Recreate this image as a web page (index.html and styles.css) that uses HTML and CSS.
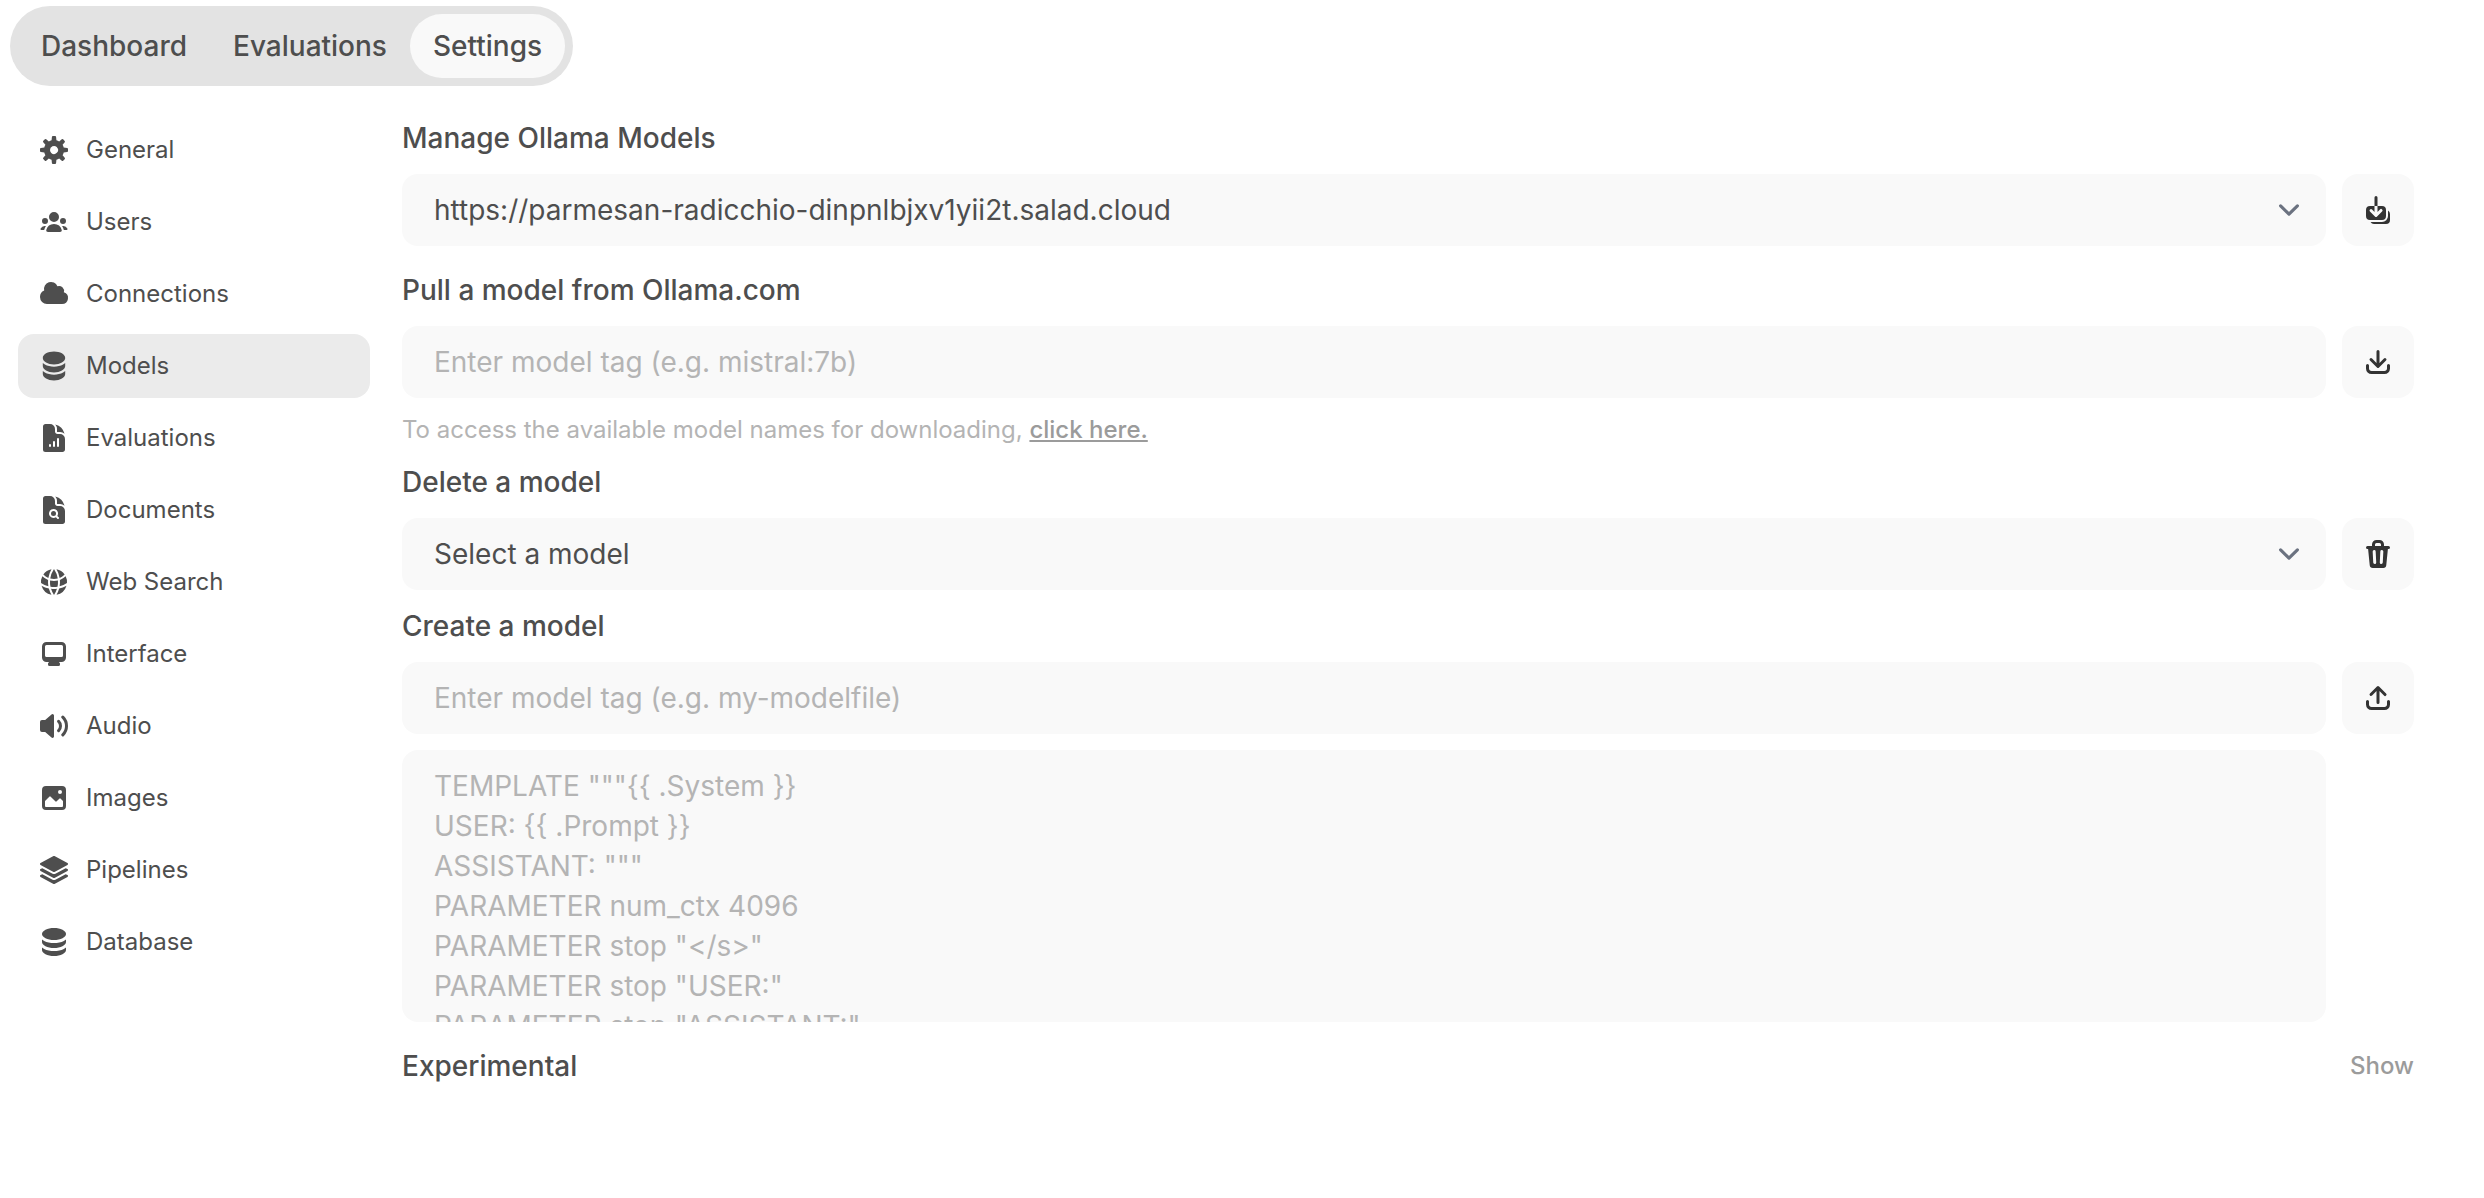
FILE: index.html
```html
<!DOCTYPE html>
<html lang="en">
<head>
<meta charset="utf-8">
<title>Settings</title>
<link rel="stylesheet" href="styles.css">
</head>
<body>
<header class="topbar">
  <nav class="tabs" aria-label="Admin">
    <a class="tab" href="#dashboard">Dashboard</a>
    <a class="tab" href="#evaluations">Evaluations</a>
    <a class="tab tab-active" href="#settings" aria-current="page">Settings</a>
  </nav>
</header>
<div class="layout">
  <nav class="sidebar" aria-label="Settings sections">
    <button class="side-item" type="button">
      <svg class="icon" viewBox="0 0 16 16" aria-hidden="true"><path fill-rule="evenodd" d="M6.955 1.45A.5.5 0 0 1 7.452 1h1.096a.5.5 0 0 1 .497.45l.17 1.699c.484.12.94.312 1.356.562l1.321-1.081a.5.5 0 0 1 .67.033l.774.775a.5.5 0 0 1 .034.67l-1.08 1.32c.25.417.44.873.561 1.357l1.699.17a.5.5 0 0 1 .45.497v1.096a.5.5 0 0 1-.45.497l-1.699.17c-.12.484-.312.94-.562 1.356l1.082 1.322a.5.5 0 0 1-.034.67l-.774.774a.5.5 0 0 1-.67.033l-1.322-1.08c-.416.25-.872.44-1.356.561l-.17 1.699a.5.5 0 0 1-.497.45H7.452a.5.5 0 0 1-.497-.45l-.17-1.699a4.973 4.973 0 0 1-1.356-.562L4.108 13.37a.5.5 0 0 1-.67-.033l-.774-.775a.5.5 0 0 1-.034-.67l1.08-1.32a4.971 4.971 0 0 1-.561-1.357l-1.699-.17A.5.5 0 0 1 1 8.548V7.452a.5.5 0 0 1 .45-.497l1.699-.17c.12-.484.312-.94.562-1.356L2.629 4.107a.5.5 0 0 1 .034-.67l.774-.774a.5.5 0 0 1 .67-.033L5.43 3.71a4.97 4.97 0 0 1 1.356-.561l.17-1.699ZM6 8c0 .538.212 1.026.558 1.385l.057.057a2 2 0 0 0 2.828-2.828l-.058-.056A2 2 0 0 0 6 8Z"/></svg>
      <span>General</span>
    </button>
    <button class="side-item" type="button">
      <svg class="icon" viewBox="0 0 16 16" aria-hidden="true"><path d="M8 8a2.5 2.5 0 1 0 0-5 2.5 2.5 0 0 0 0 5ZM3.156 11.763c.16-.629.44-1.21.813-1.72a2.5 2.5 0 0 0-2.725 1.377c-.136.287.102.58.418.58h1.449c.01-.077.025-.156.045-.237ZM12.847 11.763c.02.08.036.16.046.237h1.446c.316 0 .554-.293.417-.579a2.5 2.5 0 0 0-2.722-1.378c.374.51.653 1.09.813 1.72ZM14 7.5a1.5 1.5 0 1 1-3 0 1.5 1.5 0 0 1 3 0ZM3.5 9a1.5 1.5 0 1 0 0-3 1.5 1.5 0 0 0 0 3ZM5 13c-.552 0-1.013-.455-.876-.99a4.002 4.002 0 0 1 7.753 0c.136.535-.324.99-.877.99H5Z"/></svg>
      <span>Users</span>
    </button>
    <button class="side-item" type="button">
      <svg class="icon" viewBox="0 0 16 16" aria-hidden="true"><path d="M1 9.5A3.5 3.5 0 0 0 4.5 13H12a3 3 0 0 0 .917-5.857 2.503 2.503 0 0 0-3.198-3.019 3.5 3.5 0 0 0-6.628 2.171A3.5 3.5 0 0 0 1 9.5Z"/></svg>
      <span>Connections</span>
    </button>
    <button class="side-item side-item-active" type="button" aria-current="true">
      <svg class="icon" viewBox="0 0 20 20" aria-hidden="true"><path d="M10 1c3.866 0 7 1.79 7 4s-3.134 4-7 4-7-1.79-7-4 3.134-4 7-4zm5.694 8.13c.464-.264.91-.583 1.306-.952V10c0 2.21-3.134 4-7 4s-7-1.79-7-4V8.178c.396.37.842.688 1.306.953C5.838 10.006 7.854 10.5 10 10.5s4.162-.494 5.694-1.37zM3 13.179V15c0 2.21 3.134 4 7 4s7-1.79 7-4v-1.822c-.396.37-.842.688-1.306.953-1.532.875-3.548 1.369-5.694 1.369s-4.162-.494-5.694-1.37A7.009 7.009 0 013 13.179z"/></svg>
      <span>Models</span>
    </button>
    <button class="side-item" type="button">
      <svg class="icon" viewBox="0 0 24 24" aria-hidden="true"><path fill-rule="evenodd" d="M5.625 1.5H9a3.75 3.75 0 0 1 3.75 3.75v1.875c0 1.036.84 1.875 1.875 1.875H16.5a3.75 3.75 0 0 1 3.75 3.75v7.875c0 1.035-.84 1.875-1.875 1.875H5.625a1.875 1.875 0 0 1-1.875-1.875V3.375c0-1.036.84-1.875 1.875-1.875ZM9.75 17.25a.75.75 0 0 0-1.5 0V18a.75.75 0 0 0 1.5 0v-.75Zm2.25-3a.75.75 0 0 1 .75.75v3a.75.75 0 0 1-1.5 0v-3a.75.75 0 0 1 .75-.75Zm3.75-1.5a.75.75 0 0 0-1.5 0V18a.75.75 0 0 0 1.5 0v-5.25Z"/><path d="M14.25 5.25a5.23 5.23 0 0 0-1.279-3.434 9.768 9.768 0 0 1 6.963 6.963A5.23 5.23 0 0 0 16.5 7.5h-1.875a.375.375 0 0 1-.375-.375V5.25Z"/></svg>
      <span>Evaluations</span>
    </button>
    <button class="side-item" type="button">
      <svg class="icon" viewBox="0 0 24 24" aria-hidden="true"><path d="M11.625 16.5a1.875 1.875 0 1 0 0-3.75 1.875 1.875 0 0 0 0 3.75Z"/><path fill-rule="evenodd" d="M5.625 1.5H9a3.75 3.75 0 0 1 3.75 3.75v1.875c0 1.036.84 1.875 1.875 1.875H16.5a3.75 3.75 0 0 1 3.75 3.75v7.875c0 1.035-.84 1.875-1.875 1.875H5.625a1.875 1.875 0 0 1-1.875-1.875V3.375c0-1.036.84-1.875 1.875-1.875Zm6 16.5c.66 0 1.277-.19 1.797-.518l1.048 1.048a.75.75 0 0 0 1.06-1.06l-1.047-1.048A3.375 3.375 0 1 0 11.625 18Z"/><path d="M14.25 5.25a5.23 5.23 0 0 0-1.279-3.434 9.768 9.768 0 0 1 6.963 6.963A5.23 5.23 0 0 0 16.5 7.5h-1.875a.375.375 0 0 1-.375-.375V5.25Z"/></svg>
      <span>Documents</span>
    </button>
    <button class="side-item" type="button">
      <svg class="icon" viewBox="0 0 24 24" aria-hidden="true"><path d="M21.721 12.752a9.711 9.711 0 0 0-.945-5.003 12.754 12.754 0 0 1-4.339 2.708 18.991 18.991 0 0 1-.214 4.772 17.165 17.165 0 0 0 5.498-2.477ZM14.634 15.55a17.324 17.324 0 0 0 .332-4.647c-.952.227-1.945.347-2.966.347-1.021 0-2.014-.12-2.966-.347a17.515 17.515 0 0 0 .332 4.647 17.385 17.385 0 0 0 5.268 0ZM9.772 17.119a18.963 18.963 0 0 0 4.456 0A17.182 17.182 0 0 1 12 21.724a17.18 17.18 0 0 1-2.228-4.605ZM7.777 15.23a18.87 18.87 0 0 1-.214-4.774 12.753 12.753 0 0 1-4.34-2.708 9.711 9.711 0 0 0-.944 5.004 17.165 17.165 0 0 0 5.498 2.477ZM21.356 14.752a9.765 9.765 0 0 1-7.478 6.817 18.64 18.64 0 0 0 1.988-4.718 18.627 18.627 0 0 0 5.49-2.098ZM2.644 14.752c1.682.971 3.53 1.688 5.49 2.099a18.64 18.64 0 0 0 1.988 4.718 9.765 9.765 0 0 1-7.478-6.816ZM13.878 2.43a9.755 9.755 0 0 1 6.116 3.986 11.267 11.267 0 0 1-3.746 2.504 18.63 18.63 0 0 0-2.37-6.49ZM12 2.276a17.152 17.152 0 0 1 2.805 7.121c-.897.23-1.837.353-2.805.353-.968 0-1.908-.122-2.805-.353A17.151 17.151 0 0 1 12 2.276ZM10.122 2.43a18.629 18.629 0 0 0-2.37 6.49 11.266 11.266 0 0 1-3.746-2.504 9.754 9.754 0 0 1 6.116-3.985Z"/></svg>
      <span>Web Search</span>
    </button>
    <button class="side-item" type="button">
      <svg class="icon" viewBox="0 0 16 16" aria-hidden="true"><path fill-rule="evenodd" d="M2 4.25A2.25 2.25 0 0 1 4.25 2h7.5A2.25 2.25 0 0 1 14 4.25v5.5A2.25 2.25 0 0 1 11.75 12h-1.312c.1.128.21.248.328.36a.75.75 0 0 1 .234.545v.345a.75.75 0 0 1-.75.75h-4.5a.75.75 0 0 1-.75-.75v-.345a.75.75 0 0 1 .234-.545c.118-.111.228-.232.328-.36H4.25A2.25 2.25 0 0 1 2 9.75v-5.5Zm2.25-.75a.75.75 0 0 0-.75.75v4.5c0 .414.336.75.75.75h7.5a.75.75 0 0 0 .75-.75v-4.5a.75.75 0 0 0-.75-.75h-7.5Z"/></svg>
      <span>Interface</span>
    </button>
    <button class="side-item" type="button">
      <svg class="icon" viewBox="0 0 16 16" aria-hidden="true"><path d="M7.557 2.066A.75.75 0 0 1 8 2.75v10.5a.75.75 0 0 1-1.248.56L3.59 11H2a1 1 0 0 1-1-1V6a1 1 0 0 1 1-1h1.59l3.162-2.81a.75.75 0 0 1 .805-.124ZM12.95 3.05a.75.75 0 1 0-1.06 1.06 5.5 5.5 0 0 1 0 7.78.75.75 0 1 0 1.06 1.06 7 7 0 0 0 0-9.9Z"/><path d="M10.828 5.172a.75.75 0 1 0-1.06 1.06 2.5 2.5 0 0 1 0 3.536.75.75 0 1 0 1.06 1.06 4 4 0 0 0 0-5.656Z"/></svg>
      <span>Audio</span>
    </button>
    <button class="side-item" type="button">
      <svg class="icon" viewBox="0 0 16 16" aria-hidden="true"><path fill-rule="evenodd" d="M2 4a2 2 0 0 1 2-2h8a2 2 0 0 1 2 2v8a2 2 0 0 1-2 2H4a2 2 0 0 1-2-2V4Zm10.5 5.707a.5.5 0 0 0-.146-.353l-1-1a.5.5 0 0 0-.708 0L9.354 9.646a.5.5 0 0 1-.708 0L6.354 7.354a.5.5 0 0 0-.708 0l-2 2a.5.5 0 0 0-.146.353V12a.5.5 0 0 0 .5.5h8a.5.5 0 0 0 .5-.5V9.707ZM12 5a1 1 0 1 1-2 0 1 1 0 0 1 2 0Z"/></svg>
      <span>Images</span>
    </button>
    <button class="side-item" type="button">
      <svg class="icon" viewBox="0 0 24 24" aria-hidden="true"><path d="M11.644 1.59a.75.75 0 0 1 .712 0l9.75 5.25a.75.75 0 0 1 0 1.32l-9.75 5.25a.75.75 0 0 1-.712 0l-9.75-5.25a.75.75 0 0 1 0-1.32l9.75-5.25Z"/><path d="m3.265 10.602 7.668 4.129a2.25 2.25 0 0 0 2.134 0l7.668-4.13 1.37.739a.75.75 0 0 1 0 1.32l-9.75 5.25a.75.75 0 0 1-.71 0l-9.75-5.25a.75.75 0 0 1 0-1.32l1.37-.738Z"/><path d="m10.933 19.231-7.668-4.13-1.37.739a.75.75 0 0 0 0 1.32l9.75 5.25c.221.12.489.12.71 0l9.75-5.25a.75.75 0 0 0 0-1.32l-1.37-.738-7.668 4.13a2.25 2.25 0 0 1-2.134-.001Z"/></svg>
      <span>Pipelines</span>
    </button>
    <button class="side-item" type="button">
      <svg class="icon" viewBox="0 0 16 16" aria-hidden="true"><path d="M8 7c3.314 0 6-1.343 6-3s-2.686-3-6-3-6 1.343-6 3 2.686 3 6 3Z"/><path d="M8 8.5c1.84 0 3.579-.37 4.914-1.037A6.33 6.33 0 0 0 14 6.78V8c0 1.657-2.686 3-6 3S2 9.657 2 8V6.78c.346.273.72.5 1.087.683C4.42 8.131 6.16 8.5 8 8.5Z"/><path d="M8 12.5c1.84 0 3.579-.37 4.914-1.037.366-.183.74-.41 1.086-.684V12c0 1.657-2.686 3-6 3s-6-1.343-6-3v-1.22c.346.273.72.5 1.087.683C4.42 12.131 6.16 12.5 8 12.5Z"/></svg>
      <span>Database</span>
    </button>
  </nav>

  <main class="content">
    <section class="group group-spaced">
      <label class="title" for="server">Manage Ollama Models</label>
      <div class="row">
        <select class="field select" id="server">
          <option>https://parmesan-radicchio-dinpnlbjxv1yii2t.salad.cloud</option>
        </select>
        <button class="action" type="button" aria-label="Update all models">
          <svg class="icon" viewBox="0 0 16 16" aria-hidden="true"><path d="M7 1a.75.75 0 0 1 .75.75V6h-1.5V1.75A.75.75 0 0 1 7 1ZM6.25 6v2.94L5.03 7.72a.75.75 0 0 0-1.06 1.06l2.5 2.5a.75.75 0 0 0 1.06 0l2.5-2.5a.75.75 0 1 0-1.06-1.06L7.75 8.94V6H10a2 2 0 0 1 2 2v3a2 2 0 0 1-2 2H4a2 2 0 0 1-2-2V8a2 2 0 0 1 2-2h2.25Z"/><path d="M4.268 14A2 2 0 0 0 6 15h6a2 2 0 0 0 2-2v-3a2 2 0 0 0-1-1.732V11a3 3 0 0 1-3 3H4.268Z"/></svg>
        </button>
      </div>
    </section>

    <section class="group">
      <label class="title" for="pull">Pull a model from Ollama.com</label>
      <div class="row">
        <input class="field" id="pull" type="text" placeholder="Enter model tag (e.g. mistral:7b)">
        <button class="action" type="button" aria-label="Pull model">
          <svg class="icon" viewBox="0 0 16 16" aria-hidden="true"><path d="M8.75 2.75a.75.75 0 0 0-1.5 0v5.69L5.03 6.22a.75.75 0 0 0-1.06 1.06l3.5 3.5a.75.75 0 0 0 1.06 0l3.5-3.5a.75.75 0 0 0-1.06-1.06L8.75 8.44V2.75Z"/><path d="M3.5 9.75a.75.75 0 0 0-1.5 0v1.5A2.75 2.75 0 0 0 4.75 14h6.5A2.75 2.75 0 0 0 14 11.25v-1.5a.75.75 0 0 0-1.5 0v1.5c0 .69-.56 1.25-1.25 1.25h-6.5c-.69 0-1.25-.56-1.25-1.25v-1.5Z"/></svg>
        </button>
      </div>
      <p class="hint">To access the available model names for downloading, <a class="hint-link" href="#library">click here.</a></p>
    </section>

    <section class="group">
      <label class="title" for="delete">Delete a model</label>
      <div class="row">
        <select class="field select" id="delete">
          <option>Select a model</option>
        </select>
        <button class="action" type="button" aria-label="Delete model">
          <svg class="icon" viewBox="0 0 16 16" aria-hidden="true"><path fill-rule="evenodd" d="M5 3.25V4H2.75a.75.75 0 0 0 0 1.5h.3l.815 8.15A1.5 1.5 0 0 0 5.357 15h5.285a1.5 1.5 0 0 0 1.493-1.35l.815-8.15h.3a.75.75 0 0 0 0-1.5H11v-.75A2.25 2.25 0 0 0 8.75 1h-1.5A2.25 2.25 0 0 0 5 3.25Zm2.25-.75a.75.75 0 0 0-.75.75V4h3v-.75a.75.75 0 0 0-.75-.75h-1.5ZM6.05 6a.75.75 0 0 1 .787.713l.275 5.5a.75.75 0 0 1-1.498.075l-.275-5.5A.75.75 0 0 1 6.05 6Zm3.9 0a.75.75 0 0 1 .712.787l-.275 5.5a.75.75 0 0 1-1.498-.075l.275-5.5a.75.75 0 0 1 .786-.711Z"/></svg>
        </button>
      </div>
    </section>

    <section class="group group-spaced">
      <label class="title" for="create">Create a model</label>
      <div class="create-grid">
        <input class="field" id="create" type="text" placeholder="Enter model tag (e.g. my-modelfile)">
        <button class="action" type="button" aria-label="Create model">
          <svg class="icon" viewBox="0 0 16 16" aria-hidden="true"><path d="M7.25 10.25a.75.75 0 0 0 1.5 0V4.56l2.22 2.22a.75.75 0 1 0 1.06-1.06l-3.5-3.5a.75.75 0 0 0-1.06 0l-3.5 3.5a.75.75 0 0 0 1.06 1.06l2.22-2.22v5.69Z"/><path d="M3.5 9.75a.75.75 0 0 0-1.5 0v1.5A2.75 2.75 0 0 0 4.75 14h6.5A2.75 2.75 0 0 0 14 11.25v-1.5a.75.75 0 0 0-1.5 0v1.5c0 .69-.56 1.25-1.25 1.25h-6.5c-.69 0-1.25-.56-1.25-1.25v-1.5Z"/></svg>
        </button>
        <textarea class="field area" rows="6" aria-label="Modelfile content" placeholder="TEMPLATE &quot;&quot;&quot;{{ .System }}&#10;USER: {{ .Prompt }}&#10;ASSISTANT: &quot;&quot;&quot;&#10;PARAMETER num_ctx 4096&#10;PARAMETER stop &quot;&lt;/s&gt;&quot;&#10;PARAMETER stop &quot;USER:&quot;&#10;PARAMETER stop &quot;ASSISTANT:&quot;"></textarea>
      </div>
    </section>

    <section class="experimental">
      <h2 class="title">Experimental</h2>
      <button class="show" type="button">Show</button>
    </section>
  </main>
</div>
</body>
</html>
```

FILE: styles.css
```css
* {
  box-sizing: border-box;
}

body {
  margin: 0;
  background: #fff;
  color: #4e4e4e;
  font-family: Inter, "Liberation Sans", sans-serif;
  font-size: 28px;
  line-height: 40px;
}

button,
input,
select,
textarea {
  margin: 0;
  border: 0;
  font: inherit;
  color: inherit;
}

button {
  cursor: pointer;
}

.topbar {
  display: flex;
  padding: 6px 10px 32px;
}

.tabs {
  display: flex;
  padding: 8px;
  border-radius: 40px;
  background: #e3e3e3;
}

.tab {
  padding: 12px 23px;
  border-radius: 32px;
  color: inherit;
  font-weight: 500;
  text-decoration: none;
}

.tab-active {
  background: #f9f9f9;
}

.layout {
  display: flex;
  gap: 32px;
  padding: 0 70px 0 18px;
}

.sidebar {
  display: flex;
  flex: 0 0 352px;
  flex-direction: column;
  gap: 8px;
}

.side-item {
  display: flex;
  align-items: center;
  gap: 16px;
  padding: 16px 20px;
  border-radius: 16px;
  background: none;
  font-size: 24px;
  line-height: 32px;
  text-align: left;
}

.side-item-active {
  background: #ebebeb;
}

.icon {
  display: block;
  flex: none;
  width: 32px;
  height: 32px;
  fill: currentColor;
}

.content {
  flex: 1;
  min-width: 0;
}

.group {
  margin-bottom: 16px;
}

.group-spaced {
  margin-bottom: 24px;
}

.title {
  display: block;
  margin: 0 0 16px;
  font-size: 28px;
  font-weight: 500;
}

.row {
  display: flex;
  gap: 16px;
}

.create-grid {
  display: grid;
  grid-template-columns: 1fr auto;
  gap: 16px;
}

.field {
  flex: 1;
  width: 100%;
  min-width: 0;
  padding: 16px 32px;
  border-radius: 16px;
  outline: none;
  background: #f9f9f9;
}

.field::placeholder {
  color: #b4b4b4;
  opacity: 1;
}

.select {
  appearance: none;
  background: #f9f9f9 url("data:image/svg+xml,%3Csvg xmlns='http://www.w3.org/2000/svg' fill='none' viewBox='0 0 20 20'%3E%3Cpath stroke='%236b7280' stroke-linecap='round' stroke-linejoin='round' stroke-width='1.5' d='M6 8l4 4 4-4'/%3E%3C/svg%3E") no-repeat right 16px center / 42px 42px;
}

.area {
  display: block;
  overflow: hidden;
  resize: none;
}

.action {
  flex: none;
  padding: 20px;
  border-radius: 16px;
  background: #f9f9f9;
  color: #333;
}

.hint {
  margin: 16px 0 0;
  color: #b4b4b4;
  font-size: 24px;
  line-height: 32px;
}

.hint-link {
  color: #9b9b9b;
  font-weight: 500;
}

.experimental {
  display: flex;
  align-items: center;
  justify-content: space-between;
}

.experimental .title {
  margin: 0;
}

.show {
  padding: 0;
  background: none;
  color: #9b9b9b;
  font-size: 24px;
  font-weight: 500;
}
```
